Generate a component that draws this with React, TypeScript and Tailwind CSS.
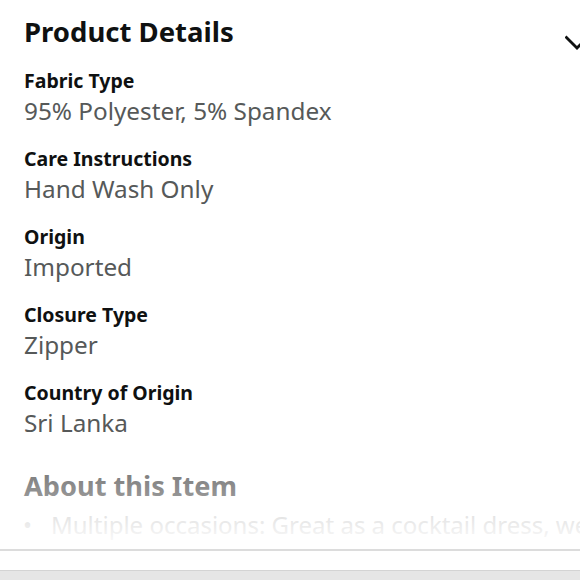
import React from "react";

const details = [
  { label: "Fabric Type", value: "95% Polyester, 5% Spandex" },
  { label: "Care Instructions", value: "Hand Wash Only" },
  { label: "Origin", value: "Imported" },
  { label: "Closure Type", value: "Zipper" },
  { label: "Country of Origin", value: "Sri Lanka" },
];

const Chevron = () => (
  <svg width="24" height="24" viewBox="0 0 24 24" className="shrink-0 -mr-[33px] mt-[19px]">
    <path d="M1.5 6.5 L12 17 L22.5 6.5" fill="none" stroke="#0f1111" strokeWidth="2.8" strokeLinecap="square" />
  </svg>
);

const App = () => {
  return (
    <div
      className="w-[580px] h-[580px] overflow-hidden bg-white flex flex-col"
      style={{ fontFamily: '"Noto Sans", "Open Sans", Arial, sans-serif' }}
    >
      <div className="px-6 pt-[12px]">
        <div className="flex justify-between items-start">
          <h2 className="text-[27.5px] font-bold text-[#0f1111] leading-[40px]">Product Details</h2>
          <Chevron />
        </div>
        <dl className="flex flex-col gap-[16px] mt-[12px]">
          {details.map((d) => (
            <div key={d.label} className="flex flex-col">
              <dt className="text-[19.5px] font-bold text-[#0f1111] leading-[28px]">{d.label}</dt>
              <dd className="text-[24.3px] text-[#565959] leading-[36px] -mt-[2px]">{d.value}</dd>
            </div>
          ))}
        </dl>
      </div>
      <div className="relative px-6 mt-[25px] h-[83px] overflow-hidden">
        <h3 className="text-[27.2px] font-bold text-[#787878] leading-[40px]">About this Item</h3>
        <ul className="mt-[4px] text-[24px] text-[#cfcfcf] leading-[30px]">
          <li className="flex whitespace-nowrap">
            <span className="w-[28px] shrink-0 -ml-[1px]">•</span>
            <span>Multiple occasions: Great as a cocktail dress, wear it to work</span>
          </li>
        </ul>
        <div className="absolute inset-0 bg-gradient-to-b from-white/0 via-white/30 to-white" />
      </div>
      <div className="border-t-2 border-[#dcdcdc] h-[21px]" />
      <div className="flex-1 bg-[#e6e6e6] border-t border-[#d4d4d4]" />
    </div>
  );
};

export default App;
